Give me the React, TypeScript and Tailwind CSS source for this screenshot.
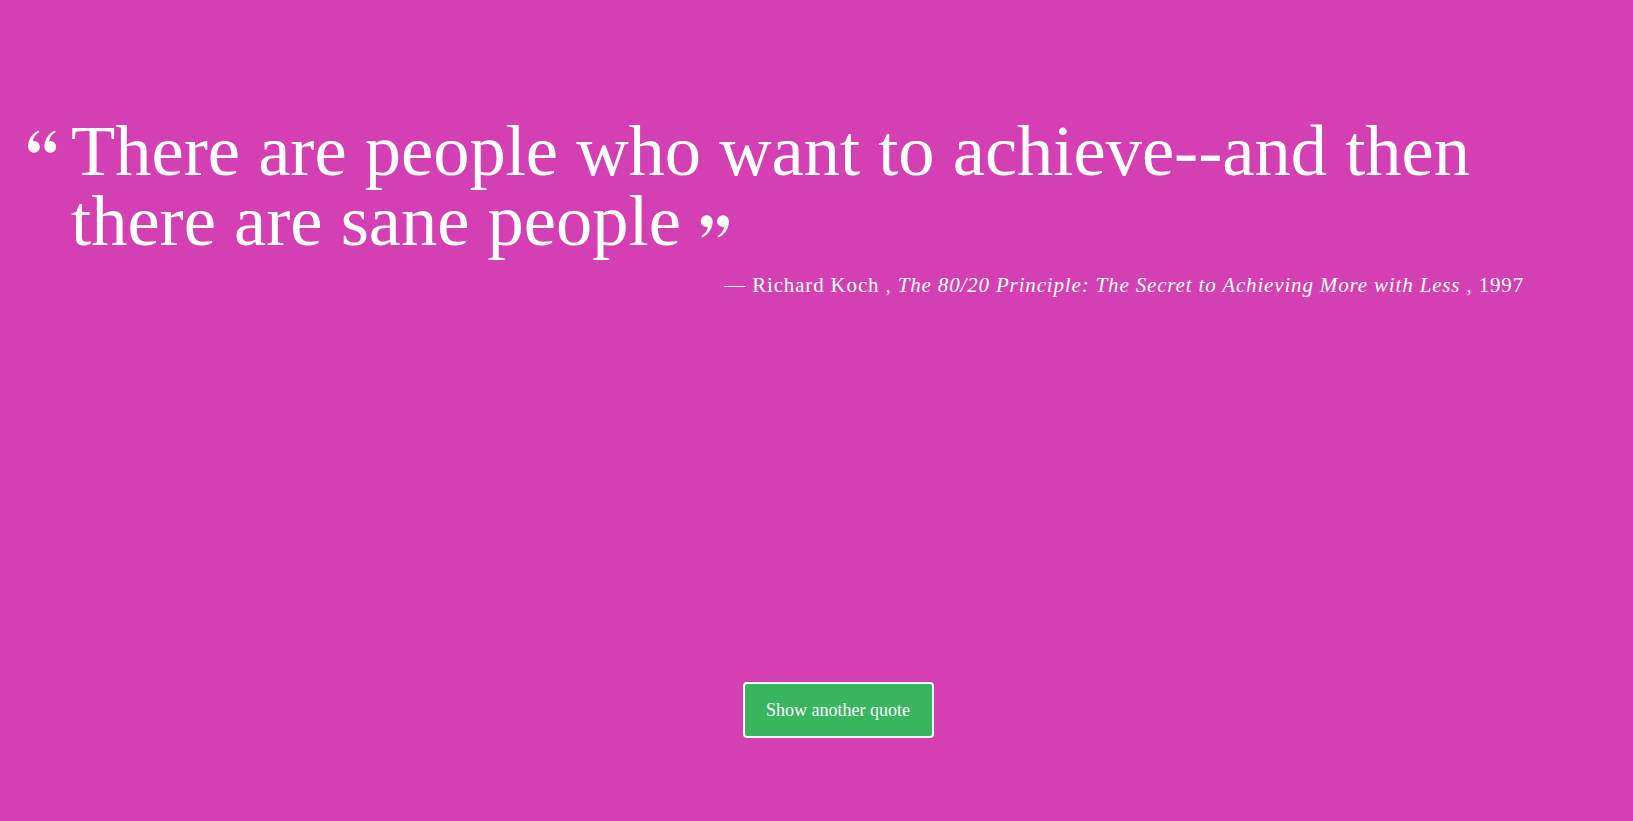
import React from "react";

function QuoteMark({ flip = false, className = "" }: { flip?: boolean; className?: string }) {
  return (
    <svg
      viewBox="0 0 30 23"
      className={className}
      fill="currentColor"
      style={flip ? { transform: "rotate(180deg)" } : undefined}
      aria-hidden="true"
    >
      <circle cx="7" cy="16.8" r="5.9" />
      <path d="M1.2 17 C1 10 4.4 4 11.6 0.5 L12.4 2 C7.6 4.8 5.6 9 5.8 13 Z" />
      <circle cx="23.3" cy="16.8" r="5.9" />
      <path d="M17.5 17 C17.3 10 20.7 4 27.9 0.5 L28.7 2 C23.9 4.8 21.9 9 22.1 13 Z" />
    </svg>
  );
}

export default function App() {
  const quote = {
    text: "There are people who want to achieve--and then there are sane people",
    author: "Richard Koch",
    source: "The 80/20 Principle: The Secret to Achieving More with Less",
    year: "1997",
  };

  return (
    <main className="h-[821px] w-full overflow-hidden bg-[#d43fb4] font-['Liberation_Serif',serif] text-white">
      <section className="flex items-start gap-[14px] pl-[27px] pr-[109px] pt-[116px]">
        <QuoteMark className="mt-[14px] h-[23px] w-[30px] shrink-0" />
        <div className="flex-1">
          <blockquote className="text-[72.5px] leading-[70.4px]">
            {quote.text}{" "}
            <QuoteMark flip className="inline-block h-[23px] w-[32px] align-[7px]" />
          </blockquote>
          <p className="mt-[13px] text-right text-[21px] leading-[1.5] tracking-[0.04em]">
            — {quote.author} , <cite className="italic">{quote.source}</cite> , {quote.year}
          </p>
        </div>
      </section>

      <div className="mt-[381px] flex justify-center pl-[43px]">
        <button
          type="button"
          className="h-[56px] w-[191px] rounded-[4px] border-2 border-white bg-[#37b55f] text-[18px] text-white"
        >
          Show another quote
        </button>
      </div>
    </main>
  );
}
